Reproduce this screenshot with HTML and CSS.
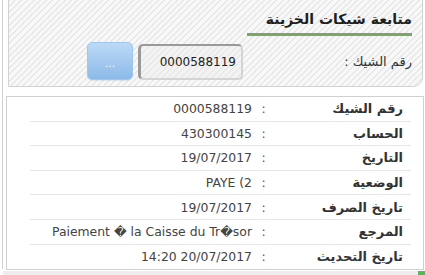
FILE: index.html
```html
<!DOCTYPE html>
<html lang="ar" dir="rtl">
<head>
<meta charset="utf-8">
<link rel="stylesheet" href="styles.css">
</head>
<body>
<div class="page">
  <div class="search-panel">
    <div class="title-wrap"><h2 class="title">متابعة شيكات الخزينة</h2></div>
    <div class="search-row">
      <label class="search-label">رقم الشيك :</label>
      <div class="search-input">0000588119</div>
      <button class="search-btn">...</button>
    </div>
  </div>
  <div class="details">
    <div class="row"><span class="lbl">رقم الشيك</span><span class="colon">:</span><span class="val">0000588119</span></div>
    <div class="row"><span class="lbl">الحساب</span><span class="colon">:</span><span class="val">430300145</span></div>
    <div class="row"><span class="lbl">التاريخ</span><span class="colon">:</span><span class="val">19/07/2017</span></div>
    <div class="row"><span class="lbl">الوضعية</span><span class="colon">:</span><span class="val" dir="ltr">PAYE (2</span></div>
    <div class="row"><span class="lbl">تاريخ الصرف</span><span class="colon">:</span><span class="val">19/07/2017</span></div>
    <div class="row"><span class="lbl">المرجع</span><span class="colon">:</span><span class="val" dir="ltr">Paiement � la Caisse du Tr�sor</span></div>
    <div class="row last"><span class="lbl">تاريخ التحديث</span><span class="colon">:</span><span class="val" dir="ltr">14:20 20/07/2017</span></div>
  </div>
  <div class="footer-band"><span class="footer-accent"></span></div>
</div>
</body>
</html>
```

FILE: styles.css
```css
html, body {
  margin: 0;
  padding: 0;
  background: #ffffff;
}
body {
  font-family: "DejaVu Sans", Tahoma, sans-serif;
  color: #333;
  width: 425px;
  height: 275px;
  overflow: hidden;
}
.page {
  direction: rtl;
  margin-left: 2px;
  border-left: 1px solid #d0d0d0;
  height: 275px;
  box-sizing: border-box;
}
.search-panel {
  margin: -6px 2px 0 5px;
  height: 93px;
  box-sizing: border-box;
  border: 1px solid #d2d2d2;
  border-bottom-right-radius: 10px;
  background: repeating-linear-gradient(135deg, #f8f8f8 0 3px, #e8e8e8 3px 4.4px);
  padding: 11px 10px 0 0;
}
.title-wrap {
  display: flex;
}
.title {
  margin: 0;
  width: 165px;
  font-size: 14px;
  font-weight: bold;
  color: #1e1e1e;
  line-height: 20px;
  padding: 3px 0 4px 0;
  border-bottom: 3px solid #78a862;
}
.search-row {
  display: flex;
  align-items: flex-end;
  margin-top: 6px;
}
.search-label {
  width: 169px;
  font-size: 13px;
  color: #333;
  align-self: center;
  margin-top: 1px;
}
.search-input {
  width: 105px;
  height: 36px;
  box-sizing: border-box;
  border: 2px solid #d4d4d4;
  border-top-color: #9a9a9a;
  border-left-color: #9a9a9a;
  border-left-width: 3px;
  border-radius: 5px;
  background: rgba(235,235,235,0.35);
  font-size: 12px;
  color: #222;
  line-height: 32px;
  padding-right: 5px;
}
.search-btn {
  margin-right: 5px;
  width: 46px;
  height: 38px;
  border: 1px solid #9fc6ec;
  border-radius: 5px;
  background: linear-gradient(#bcdaf6, #8cbae9);
  color: #f4f8ff;
  font-family: "DejaVu Sans", sans-serif;
  font-size: 11px;
  padding: 4px 0 0 0;
  box-shadow: 0 1px 1px rgba(0,0,0,0.08);
}
.details {
  margin: 9px 1px 0 3px;
  border: 1px solid #d0d0d0;
  background: #fff;
  padding: 0 12px 0 23px;
}
.row {
  display: grid;
  grid-template-columns: 140px 15px 1fr;
  height: 24.6px;
  box-sizing: border-box;
  border-bottom: 1px solid #e6e6e6;
  align-items: center;
  font-size: 12.4px;
}
.row.last {
  border-bottom: none;
}
.lbl {
  font-weight: bold;
  font-size: 13px;
  color: #333;
  padding-right: 8px;
}
.colon {
  text-align: center;
  color: #555;
}
.val {
  color: #444;
  text-align: right;
  padding-right: 4px;
}
.val[dir="ltr"] {
  text-align: right;
  direction: ltr;
}
.footer-band {
  height: 6px;
  margin-top: 1px;
  background: #eeeeee;
  display: flex;
  justify-content: flex-start;
}
.footer-accent {
  width: 7px;
  height: 6px;
  background: #5ab552;
}
```
